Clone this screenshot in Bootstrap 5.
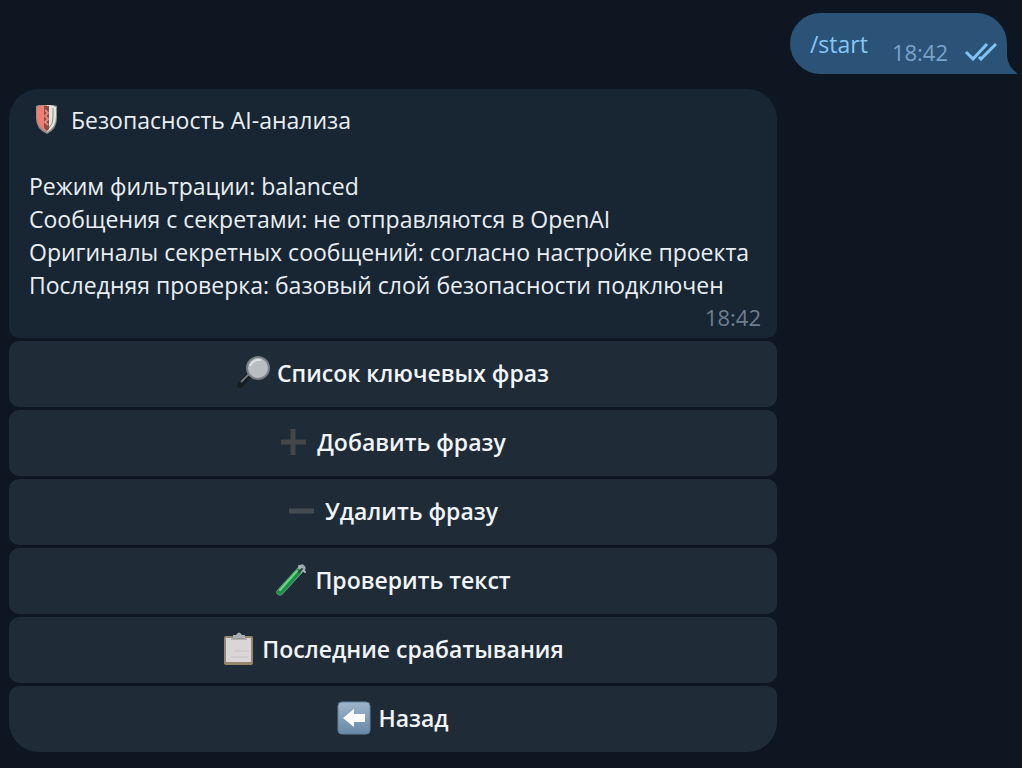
<!DOCTYPE html>
<html lang="ru">
<head>
<meta charset="utf-8">
<meta name="viewport" content="width=device-width, initial-scale=1">
<title>Безопасность AI-анализа</title>
<link href="https://cdn.jsdelivr.net/npm/bootstrap@5.3.0/dist/css/bootstrap.min.css" rel="stylesheet">
<style>
  body { background: #0e1621; color: #e9eff4; font-family: "Open Sans", "Noto Sans", sans-serif; font-size: 23px; line-height: 33px; }
  .chat { padding: 13px 15px 16px 9px; gap: 15px; }
  .bubble-out { background: #2b5378; color: #86c6f6; border-radius: 31px 31px 0 31px; padding: 15px 10px 13px 20px; gap: 24px; }
  .bubble-out .tail { position: absolute; left: 100%; bottom: 0; margin-left: -1px; }
  .msg-time { font-size: 22px; line-height: 30px; color: #6d7f8f; }
  .bubble-out .msg-time { color: #7aa4cb; line-height: 16px; gap: 17px; }
  .bot-message { max-width: 768px; gap: 3px; }
  .bubble-in { background: #182533; border-radius: 30px 30px 10px 10px; padding: 15px 16px 6px 20px; }
  .key { background: #1f2c38; color: #f1f5f8; border: 0; border-radius: 10px; height: 66px; padding: 4px 12px 6px; font-size: 23px; font-weight: 600; line-height: 33px; gap: 7px; }
  .key:hover, .key:focus { background: #263645; color: #fff; }
  .key:last-child { border-radius: 10px 10px 30px 30px; }
</style>
</head>
<body>
<main class="chat d-flex flex-column">
  <div class="bubble-out position-relative d-flex align-self-end">
    <a href="#start" class="text-reset text-decoration-none">/start</a>
    <div class="msg-time d-flex align-items-center align-self-end">
      <time>18:42</time>
      <svg width="32" height="18" viewBox="0 0 32 18" fill="none" stroke="#80c4f5" stroke-width="3" role="img" aria-label="Прочитано"><path d="M1 9l7 7L22 1M14 14l2 2L31 1"/></svg>
    </div>
    <svg class="tail" width="12" height="31" viewBox="0 0 12 31" aria-hidden="true"><path d="M0 0h1v13q1 11 10 17v1H0z" fill="#2b5378"/></svg>
  </div>

  <section class="bot-message d-flex flex-column w-100">
    <article class="bubble-in d-flex flex-column">
      <div class="d-flex align-items-center">
        <svg width="42" height="32" viewBox="0 2 42 32" aria-hidden="true">
          <path d="M7 3q10-4 21 0v12q0 11-10 16Q7 26 7 15z" fill="#8c918e"/>
          <path d="M8 4q5-2 10-2v27Q8 24 8 14z" fill="#f17c70"/>
          <path d="M18 2q5 0 9 2v10q0 10-9 15z" fill="#e4e5dd"/>
          <path d="M15 3h5v23l-2 2-3-3z" fill="#8e4b43"/>
          <path d="M16 7l3 3-3 3 3 3-3 3 3 3" fill="none" stroke="#db897f" stroke-width="2"/>
          <path d="M24 5v10q0 6-4 10" fill="none" stroke="#7e9088" stroke-width="1"/>
        </svg>
        <span>Безопасность AI-анализа</span>
      </div>
      <br>
      <span>Режим фильтрации: balanced</span>
      <span>Сообщения с секретами: не отправляются в OpenAI</span>
      <span>Оригиналы секретных сообщений: согласно настройке проекта</span>
      <span>Последняя проверка: базовый слой безопасности подключен</span>
      <time class="msg-time align-self-end">18:42</time>
    </article>

    <button type="button" class="key btn d-flex align-items-center justify-content-center">
      <svg width="33" height="34" viewBox="0 0 33 34" aria-hidden="true"><path d="M13 18L3 29" stroke="#171c21" stroke-width="6" stroke-linecap="round"/><path d="M12 18L4 26" stroke="#71777c" stroke-width="2"/><circle cx="21" cy="12" r="11" fill="#b8bdc2" stroke="#777f86" stroke-width="2"/><path d="M13 10q3-7 11-6" fill="none" stroke="#dce0e2" stroke-width="2"/></svg>
      <span>Список ключевых фраз</span>
    </button>
    <button type="button" class="key btn d-flex align-items-center justify-content-center">
      <svg width="30" height="28" viewBox="0 0 30 28" stroke="#434747" stroke-width="5" aria-hidden="true"><path d="M1 14h25M13 1v26"/></svg>
      <span>Добавить фразу</span>
    </button>
    <button type="button" class="key btn d-flex align-items-center justify-content-center">
      <svg width="30" height="28" viewBox="0 0 30 28" stroke="#434b51" stroke-width="5" aria-hidden="true"><path d="M1 14h25"/></svg>
      <span>Удалить фразу</span>
    </button>
    <button type="button" class="key btn d-flex align-items-center justify-content-center">
      <svg width="33" height="34" viewBox="0 0 33 34" fill="none" stroke-linecap="round" aria-hidden="true"><path d="M5 29L27 5" stroke="#9ca8a7" stroke-width="7"/><path d="M5 29L23 9" stroke="#169344" stroke-width="6"/><path d="M5 27L22 8" stroke="#71d38a" stroke-width="2"/><path d="M24 3l6 6" stroke="#a9b5bd" stroke-width="2"/><path d="M24 9l3-3" stroke="#35424b" stroke-width="2"/></svg>
      <span>Проверить текст</span>
    </button>
    <button type="button" class="key btn d-flex align-items-center justify-content-center">
      <svg width="33" height="34" viewBox="0 0 33 34" aria-hidden="true"><rect x="2" y="4" width="29" height="29" rx="2" fill="#97876a"/><rect x="4" y="6" width="25" height="24" fill="#dad5d6"/><path d="M11 3h3q3-5 6 0h3v4H11z" fill="#a6afb4"/><path d="M9 7h16" stroke="#858b8d" stroke-width="1"/><path d="M12 19h15M8 25h18" stroke="#c5c0c8" stroke-width="1"/></svg>
      <span>Последние срабатывания</span>
    </button>
    <button type="button" class="key btn d-flex align-items-center justify-content-center">
      <svg width="34" height="34" viewBox="0 0 34 34" aria-hidden="true"><defs><linearGradient id="arrowTile" x1="0" y1="0" x2="0" y2="1"><stop stop-color="#9fb6cc"/><stop offset="1" stop-color="#6788a5"/></linearGradient></defs><rect x="1" y="1" width="32" height="32" rx="4" fill="url(#arrowTile)" stroke="#65819b"/><path d="M6 17l11-9v5h11v8H17v5z" fill="#fff"/></svg>
      <span>Назад</span>
    </button>
  </section>
</main>
<script src="https://cdn.jsdelivr.net/npm/bootstrap@5.3.0/dist/js/bootstrap.bundle.min.js"></script>
</body>
</html>
